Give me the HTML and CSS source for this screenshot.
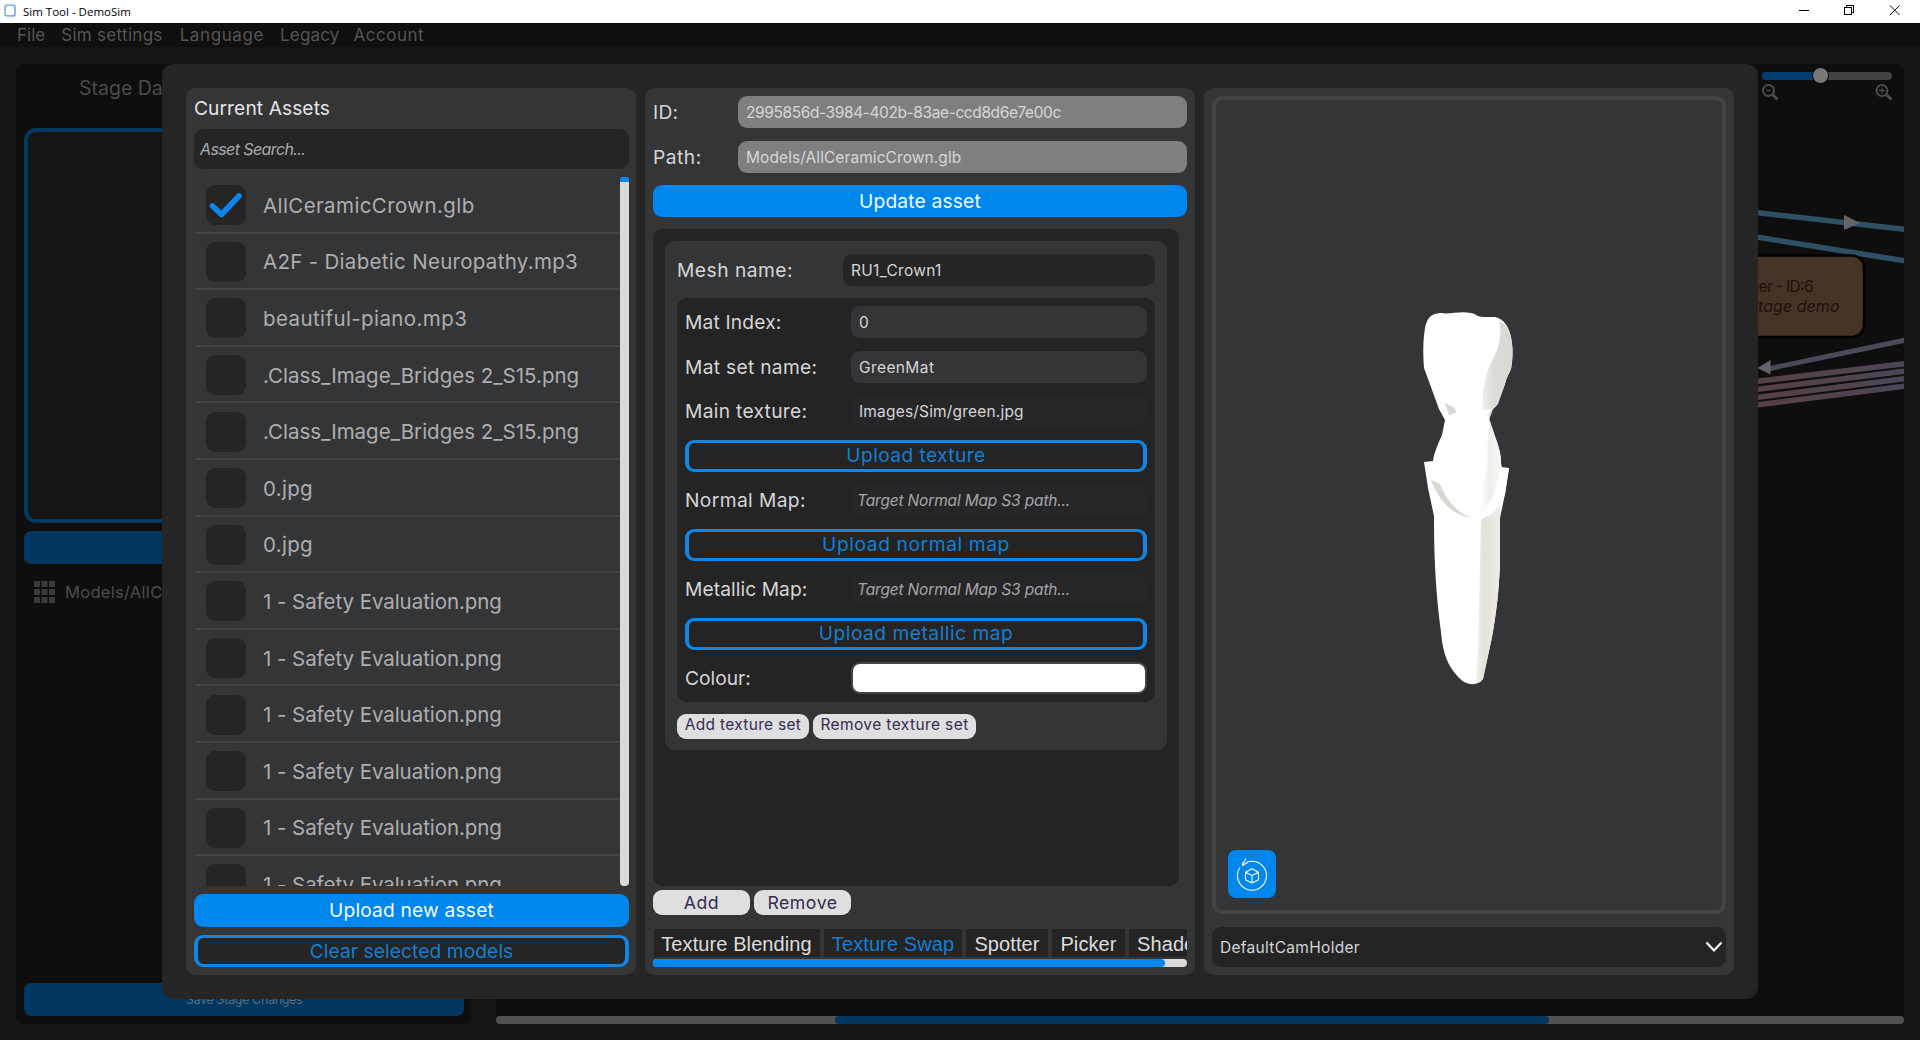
FILE: index.html
```html
<!DOCTYPE html>
<html lang="en">
<head>
<meta charset="utf-8">
<title>Sim Tool - DemoSim</title>
<link rel="stylesheet" href="styles.css">
</head>
<body>
<header class="titlebar">
  <svg class="app-icon" width="14" height="14" viewBox="0 0 14 14" fill="none" stroke="#5c93dd" stroke-width="1.3"><rect x="2" y="1.2" width="10" height="10.8" rx="2"/><path d="M4 .8h5.500M4 12.500h5.500" stroke="#a9c6f3"/></svg>
  <span class="app-title">Sim Tool - DemoSim</span>
  <svg class="win-controls" width="110" height="22" viewBox="0 0 110 22" fill="none" stroke="#000" stroke-width="1" shape-rendering="crispEdges">
    <path d="M5 10.500h10"/><path d="M50.500 7.500h7v7h-7zM52.500 7.500v-2h7v7h-2"/>
    <path d="M96 5.500l9.500 9.500M105.500 5.500l-9.500 9.500" shape-rendering="auto"/>
  </svg>
</header>
<nav class="menu">
  <span class="tr0">File</span><span class="tr3 m-sim">Sim settings</span><span class="tr6 m-lang">Language</span><span class="tr2 m-leg">Legacy</span><span class="tr5">Account</span>
</nav>

<main class="stage">
  <section class="stage-panel">
    <h2 class="stage-title">Stage Data</h2>
    <div class="preview"></div>
    <div class="stage-btn"></div>
    <div class="model-row">
      <svg width="21" height="22" viewBox="0 0 21 22" fill="#3c3c3d"><rect width="6" height="6" rx="1"/><rect x="7.500" width="6" height="6" rx="1"/><rect x="15" width="6" height="6" rx="1"/><rect y="8" width="6" height="6" rx="1"/><rect x="7.500" y="8" width="6" height="6" rx="1"/><rect x="15" y="8" width="6" height="6" rx="1"/><rect y="16" width="6" height="6" rx="1"/><rect x="7.500" y="16" width="6" height="6" rx="1"/><rect x="15" y="16" width="6" height="6" rx="1"/></svg>
      <span>Models/AllCeramic</span>
    </div>
    <div class="stage-btn save">Save Stage Changes</div>
  </section>
  <section class="graph-panel">
    <svg class="graph" width="146" height="952" viewBox="1758 64 146 952">
      <rect x="1762" y="72" width="130" height="8" rx="4" fill="#434343"/>
      <path d="M1766 72h50v8h-50a4 4 0 0 1 0-8z" fill="#003f70"/>
      <circle cx="1820.500" cy="75.500" r="8" fill="#777" stroke="#050505" stroke-width="1"/>
      <g fill="none" stroke="#4b4b4b" stroke-width="2">
        <circle cx="1768.500" cy="90.500" r="5.500"/><path d="M1772.500 94.500l5 5" stroke-width="3"/><path d="M1766.500 90.500h4" stroke-width="1.500"/>
        <circle cx="1882" cy="90.500" r="5.500"/><path d="M1886 94.500l5.500 5" stroke-width="3"/><path d="M1879 90.500h6M1882 87.500v6" stroke-width="1.300"/>
      </g>
      <g stroke="#2d5062" stroke-width="5.500"><path d="M1756 212.500L1906 229.500M1756 237L1906 261"/></g>
      <path d="M1844 215l16 8-16 7z" fill="#646466"/>
      <rect x="1700" y="255.500" width="164" height="81.500" rx="12" fill="#463327" stroke="#000" stroke-width="2.500"/>
      <g stroke-width="5"><path d="M1765 369.500L1906 340" stroke="#494a59"/></g>
      <path d="M1757.500 368l13-8v14.500z" fill="#646466"/>
      <g stroke="url(#wire)" stroke-width="5.500"><path d="M1756 381.500L1906 363.500M1756 389.500L1906 371M1756 397.500L1906 378.500M1756 405L1906 386"/></g>
      <defs><linearGradient id="wire" gradientUnits="userSpaceOnUse" x1="1758" y1="0" x2="1904" y2="0"><stop offset="0" stop-color="#573f46"/><stop offset="1" stop-color="#4c4755"/></linearGradient></defs>
      <g fill="#1b120d" font-family="Inter, sans-serif" font-size="15.500"><text x="1758.500" y="292" textLength="55" lengthAdjust="spacing">er - ID:6</text><text x="1758" y="312" font-style="italic" font-size="16" textLength="81.500" lengthAdjust="spacing">tage demo</text></g>
    </svg>
    <div class="graph-scroll"><div class="graph-thumb"></div></div>
  </section>
</main>

<div class="modal">
  <section class="panel assets">
    <h2 class="heading tr1">Current Assets</h2>
    <div class="search">Asset Search...</div>
    <div class="list-wrap">
      <ul class="list">
        <li><i class="box"><svg width="34" height="26" viewBox="0 0 34 26" fill="none" stroke="#0a87ee" stroke-width="5.500" stroke-linecap="round" stroke-linejoin="round"><path d="M3.500 14l9 8.500L30 4"/></svg></i><span class="tr4">AllCeramicCrown.glb</span></li>
        <li><i class="box"></i><span class="tr3">A2F - Diabetic Neuropathy.mp3</span></li>
        <li><i class="box"></i><span class="tr4">beautiful-piano.mp3</span></li>
        <li><i class="box"></i><span class="tr0">.Class_Image_Bridges 2_S15.png</span></li>
        <li><i class="box"></i><span class="tr0">.Class_Image_Bridges 2_S15.png</span></li>
        <li><i class="box"></i><span class="tr3">0.jpg</span></li>
        <li><i class="box"></i><span class="tr3">0.jpg</span></li>
        <li><i class="box"></i><span class="file-eval">1 - Safety Evaluation.png</span></li>
        <li><i class="box"></i><span class="file-eval">1 - Safety Evaluation.png</span></li>
        <li><i class="box"></i><span class="file-eval">1 - Safety Evaluation.png</span></li>
        <li><i class="box"></i><span class="file-eval">1 - Safety Evaluation.png</span></li>
        <li><i class="box"></i><span class="file-eval">1 - Safety Evaluation.png</span></li>
        <li><i class="box"></i><span class="file-eval">1 - Safety Evaluation.png</span></li>
      </ul>
      <div class="vscroll"><div class="vthumb"></div></div>
    </div>
    <div class="btn solid tr2">Upload new asset</div>
    <div class="btn outline clear tr1">Clear selected models</div>
  </section>

  <section class="panel details">
    <div class="row"><span class="label tr3">ID:</span><div class="field readonly trn4">2995856d-3984-402b-83ae-ccd8d6e7e00c</div></div>
    <div class="row"><span class="label tr5">Path:</span><div class="field readonly tr1">Models/AllCeramicCrown.glb</div></div>
    <div class="btn solid tr2">Update asset</div>
    <div class="meshes">
      <div class="mesh">
        <div class="row mesh-row"><span class="label tr5">Mesh name:</span><div class="field dark tr3">RU1_Crown1</div></div>
        <div class="material">
          <div class="row"><span class="label tr2">Mat Index:</span><div class="field">0</div></div>
          <div class="row"><span class="label tr3">Mat set name:</span><div class="field tr4">GreenMat</div></div>
          <div class="row"><span class="label tr3">Main texture:</span><div class="field faint tr2">Images/Sim/green.jpg</div></div>
          <div class="btn outline tr4">Upload texture</div>
          <div class="row"><span class="label tr4">Normal Map:</span><div class="field faint hint">Target Normal Map S3 path...</div></div>
          <div class="btn outline tr6">Upload normal map</div>
          <div class="row"><span class="label tr1">Metallic Map:</span><div class="field faint hint">Target Normal Map S3 path...</div></div>
          <div class="btn outline tr5">Upload metallic map</div>
          <div class="row"><span class="label tr0">Colour:</span><div class="swatch"></div></div>
        </div>
        <div class="pills small"><span class="pill set-add tr3">Add texture set</span><span class="pill set-remove tr4">Remove texture set</span></div>
      </div>
    </div>
    <div class="pills"><span class="pill tr5">Add</span><span class="pill tr5">Remove</span></div>
    <div class="tabs"><span class="tab t-blend">Texture Blending</span><span class="tab t-swap active">Texture Swap</span><span class="tab t-spot">Spotter</span><span class="tab t-pick">Picker</span><span class="tab t-shade">Shade</span></div>
    <div class="hscroll"><div class="hthumb"></div></div>
  </section>

  <section class="panel viewer">
    <div class="viewport">
      <svg class="tooth" width="100" height="380" viewBox="0 0 100 380">
        <defs>
          <linearGradient id="shade" x1="0" x2="1" y1="0" y2="0"><stop offset="0" stop-color="#eeeeea"/><stop offset=".4" stop-color="#dcddd8"/><stop offset="1" stop-color="#d6d8d2"/></linearGradient>
          <linearGradient id="root" x1="0" x2="1" y1="0" y2="0"><stop offset="0" stop-color="#f3f2ee"/><stop offset=".35" stop-color="#e4e1d9"/><stop offset="1" stop-color="#efede8"/></linearGradient>
          <linearGradient id="core" x1="0" x2="1" y1="0" y2="0"><stop offset="0" stop-color="#fff"/><stop offset=".5" stop-color="#eeeeeb"/><stop offset="1" stop-color="#f8f8f6"/></linearGradient>
        </defs>
        <path fill="#fff" d="M8 4C13 1 17 .5 22 1.500C32 1 39-1 48 1C54 2 54 5 60 5H72C81 7 86 15 88 25C90 34 90 46 88 57C86 62 83 66 82 72L74 93L69 98L66 108L74 130C77 139 78 145 78 151L79 156L86 156L82 182L77 206V250C76 280 73 303 69 325L60 367Q56 373 47 372Q39 371 31 360C23 350 19 335 18 320C13 280 11 250 11 204L5 176L1 150L10 149C11 141 15 132 19 123L22 108L16 97L1 56C-.5 40 .5 20 3 12Q5 6 8 4z"/>
        <path fill="url(#shade)" d="M76 8C84 13 87 20 88 27C90 35 90 46 88 57C86 62 83 66 82 72L75 92L70 97L67 105L64 104L59 97L60 84C61 72 63 60 70 47C77 32 79 23 76 8z"/>
        <path fill="#fff" d="M59 98L69 97L66 101L63 104L59 102z"/>
        <path fill="url(#core)" d="M66 106L74 130C77 139 78 145 78 151L76 167C73 179 66 196 57 200L59 172C66 160 64 150 64 140z"/>
        <path fill="#d9dad5" d="M22 91L32 96L33 101L26 103z"/>
        <path fill="#d7d8d1" d="M8 168L17 172C22 186 34 201 47 205L53 206C33 206 17 192 8 168z"/>
        <path fill="url(#root)" d="M58 207Q68 202 77 192V250C76 280 73 303 69 325L60 367Q57 371 53 371L55 340z"/>
        <path fill="#fff" d="M78 155L86 156L82 182C77 195 69 204 58 207L52 206C64 201 71 190 74 172z"/>
      </svg>
      <div class="orbit">
        <svg width="48" height="48" viewBox="0 0 48 48" fill="none" stroke="#fff" stroke-width="1.100" stroke-linejoin="round"><path d="M18.500 12.200Q21 11.200 24.500 11.200A14.500 14.500 0 1 1 12 17.500"/><path d="M17.800 8.500L14.500 15.500L19.500 12.500M14.500 15.500V12.500"/><path d="M24 18.700l6.500 3.500v7.500L24 33l-6.500-3.300V22.200zM17.500 22.200l6.500 3.300 6.500-3.300M24 25.500V33"/></svg>
      </div>
    </div>
    <div class="select"><span class="tr3">DefaultCamHolder</span><svg width="18" height="12" viewBox="0 0 18 12" fill="none" stroke="#fff" stroke-width="2.200"><path d="M1.500 1.500L9 9.500l7.500-8"/></svg></div>
  </section>
</div>
</body>
</html>
```
FILE: styles.css
```css
* { box-sizing: border-box; }
body { margin: 0; width: 1920px; height: 1040px; overflow: hidden; position: relative; background: #151517; font-family: Inter, "Liberation Sans", sans-serif; display: flex; flex-direction: column; }
h2, ul { margin: 0; padding: 0; font-weight: 400; list-style: none; }
svg { display: block; flex: none; }

/* Tracking steps, in tenths of a pixel */
.trn4 { letter-spacing: -.4px; }
.tr0 { letter-spacing: 0; }
.tr1 { letter-spacing: .08px; }
.tr2 { letter-spacing: .18px; }
.tr3 { letter-spacing: .3px; }
.tr4 { letter-spacing: .4px; }
.tr5 { letter-spacing: .5px; }
.tr6 { letter-spacing: .6px; }

.titlebar { height: 23px; background: #fff; display: flex; align-items: center; padding: 0 16px 1px 3px; flex: none; }
.app-title { font: 11.5px "Open Sans", sans-serif; color: #000; margin-left: 6px; flex: 1; }
.menu { height: 24px; background: #0f0f0f; display: flex; align-items: center; padding: 0 16px 0 17px; font-size: 17px; color: #555; flex: none; }
.m-sim { margin-left: 16px; }
.m-lang { margin: 0 16px 0 17px; }
.m-leg { margin-right: 14px; }

.stage { flex: 1; display: flex; gap: 25px; padding: 17px 16px 16px; }
.stage-panel { width: 455px; background: #0e0e0e; border-radius: 6px; padding: 0 7px 8px 8px; display: flex; flex-direction: column; }
.stage-title { height: 64px; padding: 12px 0 0 55px; font-size: 19.5px; line-height: 24px; color: #4a4a4b; }
.preview { height: 395px; border: 4px solid #003a63; border-radius: 12px; background: #151517; }
.stage-btn { height: 33px; margin-top: 8px; border-radius: 7px; background: #00365f; }
.model-row { display: flex; align-items: center; gap: 10px; padding: 17px 0 0 10px; font-size: 16.5px; letter-spacing: .3px; color: #4c4c4d; }
.save { margin-top: auto; text-align: center; font-size: 12.5px; letter-spacing: -.34px; line-height: 33px; color: #5a6d7d; }
.graph-panel { flex: 1; background: #0e0e0e; border-radius: 6px; display: flex; flex-direction: column; align-items: flex-end; }
.graph-scroll { width: 100%; height: 8px; border-radius: 4px; background: #525252; padding: 0 355px 0 339px; }
.graph-thumb { height: 8px; border-radius: 4px; background: #00365f; }

/* The dialog floats above the dimmed stage editor. */
.modal { position: absolute; left: 162px; top: 64px; width: 1596px; height: 935px; background: #252525; border-radius: 12px; padding: 24px; display: grid; grid-template-columns: 450px 550px 530px; gap: 9px; color: #d5d5d7; }
.panel { background: #343537; border-radius: 9px; padding: 8px; display: flex; flex-direction: column; min-width: 0; }

.heading { font-size: 19.2px; line-height: 24px; color: #e4e4e6; }
.search { height: 40px; margin-top: 9px; border-radius: 9px; background: #252525; padding-left: 6px; font-size: 16px; line-height: 40px; font-style: italic; letter-spacing: -.6px; color: #a9a9ab; }
.list-wrap { margin-top: 8px; height: 709px; display: flex; }
.list { flex: 1; margin-left: 1px; overflow: hidden; }
.list li { height: 56.6px; border-bottom: 2.6px solid #424345; display: flex; align-items: center; gap: 17px; padding: 2px 0 0 11px; font-size: 20.5px; color: #adaeb0; white-space: nowrap; }
.file-eval { letter-spacing: -.06px; }
.box { width: 40px; height: 40px; border-radius: 9px; background: #252525; display: grid; place-items: center; }
.vscroll { width: 9px; border-radius: 4px; background: #dadada; }
.vthumb { height: 5px; border-radius: 3px 3px 0 0; background: #0a87ee; }

.assets { padding: 8px 7px 8px 8px; }
.btn { height: 32px; border-radius: 9px; display: flex; align-items: center; justify-content: center; font-size: 19.2px; padding-bottom: 1px; flex: none; }
.solid { background: #0087ee; color: #f4faff; }
.outline { border: 3px solid #0f86e3; border-width: 3px 4px; background: #242424; color: #147ed2; padding-bottom: 1px; }
.assets .solid { margin-top: 8px; height: 33px; }
.clear { margin-top: 8px; background: #252525; }

.row { display: flex; align-items: center; flex: none; height: 32px; }
.label { font-size: 19.2px; width: 85px; }
.field { flex: 1; height: 32px; border-radius: 9px; background: #343537; padding-left: 8px; font-size: 15.5px; line-height: 33px; }
.readonly { background: #7f7f7f; color: #d6d6d9; }
.dark { background: #252525; }
.faint { background: #262628; }
.hint { font-style: italic; letter-spacing: -.17px; padding-left: 6px; color: #a5a5a7; }
.details .row + .row, .details > .solid { margin-top: 12.5px; }
.meshes { width: 526px; height: 657px; margin-top: 12px; border-radius: 9px; background: #242424; padding: 12px; flex: none; }
.mesh { height: 509px; border-radius: 10px; background: #343537; padding: 13px 12px; }
.mesh-row .label { width: 166px; }
.material { height: 404px; margin-top: 12px; border-radius: 9px; background: #242424; padding: 8px; display: flex; flex-direction: column; gap: 12.5px; }
.details .material .row + .row { margin-top: 0; }
.material .label { width: 166px; }
.swatch { flex: 1; height: 32px; border-radius: 9px; background: #fff; border: 2px solid #454547; }
.pills { display: flex; gap: 4px; margin-top: 4px; }
.small { margin-top: 12px; }
.pill { width: 97px; height: 25px; border-radius: 9px; background: #dfdfe0; color: #362c50; font-size: 17.7px; display: flex; align-items: center; justify-content: center; white-space: nowrap; }
.small .pill { font-size: 15.5px; padding-bottom: 4px; }
.small .set-add { width: 132px; }
.small .set-remove { width: 163px; }
.tabs { display: flex; gap: 4px; margin-top: 14px; height: 30px; overflow: hidden; font: 20px/31px "Liberation Sans", sans-serif; padding-left: 1px; }
.tab { flex: none; height: 28px; background: #242424; text-align: center; white-space: nowrap; letter-spacing: .1px; color: #dcdcdd; }
.t-blend { width: 166px; padding-right: 1px; }
.t-swap { width: 138px; }
.t-spot { width: 82px; }
.t-pick { width: 73px; }
.t-shade { width: 73px; text-align: left; padding-left: 8px; }
.active { color: #147ed2; }
.hscroll { height: 8px; border-radius: 4px; background: #dadada; }
.hthumb { width: 512px; height: 8px; border-radius: 4px; background: #0087ee; }

.viewport { position: relative; height: 818px; border: 4px solid #424345; border-radius: 10px; background: #343537; flex: none; }
.tooth { position: absolute; left: 206.5px; top: 211.5px; overflow: visible; }
.orbit { position: absolute; left: 12px; top: 750px; width: 48px; height: 48px; border-radius: 8px; background: #0087ee; }
.select { margin-top: 13px; height: 40px; border-radius: 9px; background: #242424; padding: 0 3px 0 8px; display: flex; align-items: center; justify-content: space-between; font-size: 15.5px; }
```
